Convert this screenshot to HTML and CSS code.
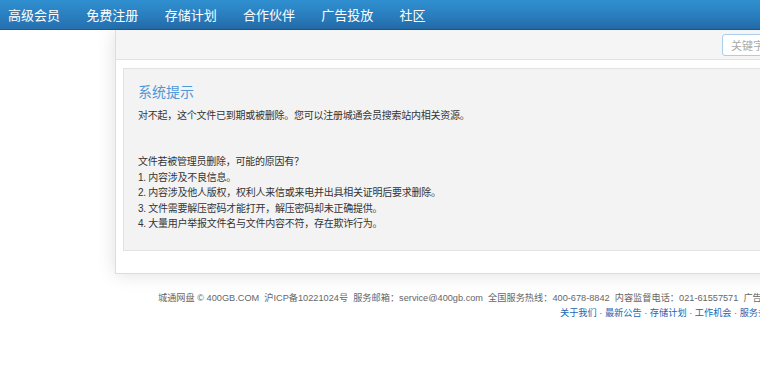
FILE: index.html
```html
<!DOCTYPE html>
<html lang="zh-CN">
<head>
<meta charset="utf-8">
<title>城通网盘 - 系统提示</title>
<link rel="stylesheet" href="styles.css">
</head>
<body>
<nav class="topnav">
  <a class="nav-item" href="#">高级会员</a>
  <a class="nav-item" href="#">免费注册</a>
  <a class="nav-item" href="#">存储计划</a>
  <a class="nav-item" href="#">合作伙伴</a>
  <a class="nav-item" href="#">广告投放</a>
  <a class="nav-item" href="#">社区</a>
</nav>
<main class="card">
  <div class="toolbar">
    <input class="search" type="text" placeholder="关键字">
  </div>
  <section class="notice">
    <h2 class="notice-title">系统提示</h2>
    <p class="notice-msg">对不起，这个文件已到期或被删除。您可以注册城通会员搜索站内相关资源。</p>
    <div class="reasons">
      <p>文件若被管理员删除，可能的原因有？</p>
      <p>1. 内容涉及不良信息。</p>
      <p>2. 内容涉及他人版权，权利人来信或来电并出具相关证明后要求删除。</p>
      <p>3. 文件需要解压密码才能打开，解压密码却未正确提供。</p>
      <p>4. 大量用户举报文件名与文件内容不符，存在欺诈行为。</p>
    </div>
  </section>
</main>
<footer class="footer">
  <p class="footer-info">城通网盘 © 400GB.COM&nbsp;&nbsp;沪ICP备10221024号&nbsp;&nbsp;服务邮箱：service@400gb.com&nbsp;&nbsp;全国服务热线：400-678-8842&nbsp;&nbsp;内容监督电话：021-61557571&nbsp;&nbsp;广告合作</p>
  <p class="footer-links"><a href="#">关于我们</a> · <a href="#">最新公告</a> · <a href="#">存储计划</a> · <a href="#">工作机会</a> · <a href="#">服务条款</a></p>
</footer>
</body>
</html>
```
FILE: styles.css
```css
html, body {
  margin: 0;
  padding: 0;
  overflow: hidden;
  background: #fff;
  font-family: "Liberation Sans", "Noto Sans CJK SC", sans-serif;
}
p { margin: 0; }

.topnav {
  display: flex;
  gap: 26.3px;
  align-items: center;
  padding-left: 8px;
  background: linear-gradient(#2f8fd0, #2670b0);
  border-bottom: 1px solid #1d5a92;
  box-sizing: border-box;
  height: 30px;
}
.nav-item {
  color: #fff;
  text-decoration: none;
  font-size: 13px;
  font-family: "Noto Sans CJK SC", sans-serif;
  line-height: 29px;
}

.card {
  display: block;
  margin-left: 115px;
  width: 900px;
  background: #fff;
  border: 1px solid #ddd;
  border-top: none;
  box-shadow: 0 0 18px rgba(0, 0, 0, 0.13);
  padding-bottom: 22px;
}
.toolbar {
  height: 29px;
  background: #f5f5f5;
  border-bottom: 1px solid #e2e2e2;
  display: flex;
  align-items: center;
  padding-left: 606px;
}
.search {
  width: 100px;
  height: 22px;
  box-sizing: border-box;
  border: 1px solid #a9cdec;
  border-radius: 3px;
  padding: 0 8px;
  font-size: 11px;
  font-family: "Noto Sans CJK SC", sans-serif;
  background: #fff;
  outline: none;
}
.search::placeholder { color: #aaa; }

.notice {
  margin: 8px 0 0 7px;
  background: #f3f3f3;
  border: 1px solid #e2e2e2;
  padding: 13px 14px 18px;
  color: #333;
  font-size: 10px;
  letter-spacing: -0.25px;
}
.notice-title {
  margin: 0;
  font-size: 14px;
  font-weight: normal;
  color: #4e97d8;
  line-height: 20px;
  letter-spacing: 0;
}
.notice-msg {
  margin-top: 6px;
  line-height: 15px;
}
.reasons {
  margin-top: 31px;
  line-height: 15.5px;
}

.footer {
  padding-top: 17px;
  font-size: 9.2px;
  color: #666;
  line-height: 15px;
  white-space: nowrap;
}
.footer-info { padding-left: 158px; }
.footer-links { padding-left: 560px; }
.footer-links a { color: #2466b2; text-decoration: none; }
```
